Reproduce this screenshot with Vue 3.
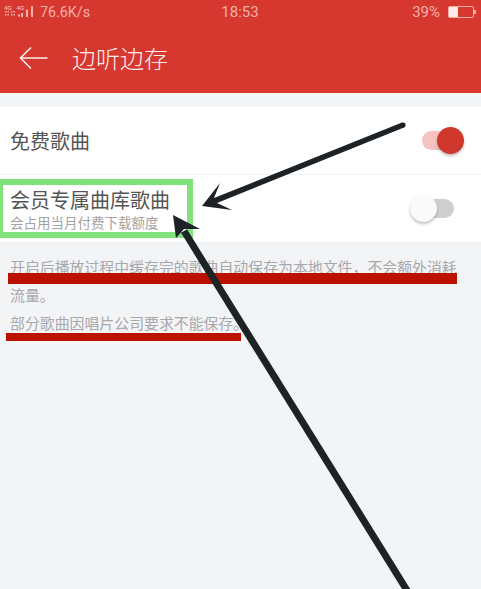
<script setup>
const status = { left: '76.6K/s', time: '18:53', battery: '39%' }
</script>

<template>
  <div class="page">
    <header class="head">
      <div class="status">
        <div class="status-left">
          <svg class="signal" width="30" height="14" viewBox="0 0 30 14">
            <g fill="#f2b0aa">
              <rect x="1" y="6" width="1.5" height="1.5" /><rect x="3.5" y="6" width="1.5" height="1.5" />
              <rect x="1" y="9" width="1.5" height="1.5" /><rect x="3.5" y="9" width="1.5" height="1.5" />
              <rect x="7" y="6" width="1.5" height="1.5" /><rect x="9.5" y="6" width="1.5" height="1.5" />
              <rect x="7" y="9" width="1.5" height="1.5" /><rect x="9.5" y="9" width="1.5" height="1.5" />
              <rect x="14" y="9.5" width="2" height="2" />
              <rect x="17" y="8" width="2" height="4" />
              <rect x="22" y="4.5" width="2" height="7.5" />
              <rect x="27" y="1" width="2" height="11" />
            </g>
            <text x="0" y="4.8" class="sig-text">4G</text>
            <text x="12.5" y="4.8" class="sig-text">4G</text>
          </svg>
          <span class="speed">{{ status.left }}</span>
        </div>
        <span class="time">{{ status.time }}</span>
        <div class="status-right">
          <span class="pct">{{ status.battery }}</span>
          <span class="battery"><span class="battery-fill"></span></span>
        </div>
      </div>
      <div class="bar">
        <svg class="back" width="30" height="26" viewBox="0 0 30 26" fill="none" stroke="#fdeeec" stroke-width="1.6">
          <path d="M1.5 13H28.5M12 2.5 1.5 13 12 23.5" />
        </svg>
        <span class="title">边听边存</span>
      </div>
    </header>

    <section class="card">
      <div class="row row-first">
        <span class="row-title">免费歌曲</span>
        <span class="toggle on"><span class="knob"></span></span>
      </div>
      <div class="row row-second">
        <div class="row-text">
          <span class="row-title">会员专属曲库歌曲</span>
          <span class="row-sub">会占用当月付费下载额度</span>
        </div>
        <span class="toggle off"><span class="knob"></span></span>
      </div>
    </section>

    <section class="notes">
      <p class="note">开启后播放过程中缓存完的歌曲自动保存为本地文件，不会额外消耗流量。</p>
      <p class="note">部分歌曲因唱片公司要求不能保存。</p>
    </section>

    <div class="mark-green"></div>
    <div class="mark-red mark-a"></div>
    <div class="mark-red mark-b"></div>

    <svg class="arrows" width="481" height="589" viewBox="0 0 481 589" fill="#1d2226">
      <circle cx="403" cy="125" r="2.6" />
      <path d="M202 206 220 183 214 198 402 122.6 404 127.4 217 203 232 210Z" />
      <path d="M408 592 184 231" stroke="#1d2226" stroke-width="7" fill="none" />
      <path d="M173 215 200 229 184 229 176 238Z" />
    </svg>
  </div>
</template>

<style>
html, body { margin: 0; padding: 0; }
</style>

<style scoped>
.page {
  position: relative;
  width: 481px;
  height: 589px;
  overflow: hidden;
  background: #f3f4f6;
  font-family: "Noto Sans CJK SC", "Liberation Sans", sans-serif;
}
.head { height: 93px; background: #d6382f; display: flex; flex-direction: column; }
.status {
  height: 24px;
  padding: 0 7px 0 4px;
  display: grid;
  grid-template-columns: 1fr auto 1fr;
  align-items: center;
  color: #f2b0aa;
  font-family: Roboto, "Liberation Sans", sans-serif;
  font-size: 15px;
}
.status-left { display: flex; align-items: center; gap: 6px; }
.speed { font-size: 14.3px; }
.time { padding-left: 2px; }
.sig-text { font-size: 6px; font-weight: 700; fill: #f2b0aa; font-family: "Liberation Sans", sans-serif; }
.status-right { display: flex; align-items: center; justify-content: flex-end; gap: 8px; }
.battery {
  width: 24px; height: 10px; border: 1px solid #f2b0aa; border-radius: 2px;
  display: block; box-sizing: content-box; position: relative;
}
.battery::after {
  content: ""; position: absolute; right: -3px; top: 3px; width: 2px; height: 4px; background: #f2b0aa;
}
.battery-fill { display: block; width: 9px; height: 10px; background: #fdecea; }
.bar { flex: 1; display: flex; align-items: center; padding: 0 0 1px 19px; gap: 23px; }
.title { color: #fdeeec; font-size: 24px; line-height: 30px; font-weight: 300; }
.card { margin-top: 14px; background: #fff; height: 135px; display: flex; flex-direction: column; }
.row { height: 67px; display: flex; align-items: center; justify-content: space-between; padding: 0 21px 0 10px; }
.row-second { border-top: 1px solid #f0f0f1; }
.row-text { display: flex; flex-direction: column; }
.row-title { font-size: 20px; line-height: 26px; color: #555; }
.row-sub { font-size: 13.5px; line-height: 18px; color: #a3a3a3; }
.toggle { position: relative; display: block; height: 19px; border-radius: 10px; }
.toggle.on { width: 38px; background: #f5c4c1; }
.toggle.off { width: 32px; margin-right: 6px; background: #cfcfcf; }
.knob {
  position: absolute; top: -4px; width: 27px; height: 27px; border-radius: 50%;
  box-shadow: 0 2px 3px rgba(0,0,0,.25);
}
.on .knob { right: -4px; background: #d0372c; }
.off .knob { left: -12px; background: #fafafa; }
.notes { padding: 11px 20px 0 10px; }
.note { margin: 0; font-size: 14.9px; line-height: 28px; color: #a7a8ab; }
.mark-green {
  position: absolute; left: 0; top: 179px; width: 193px; height: 59px;
  box-sizing: border-box; border: 6px solid #7fe27a; border-left-width: 3px;
}
.mark-red { position: absolute; background: #bb1200; }
.mark-a { left: 8px; top: 273px; width: 449px; height: 11px; }
.mark-b { left: 6px; top: 333px; width: 235px; height: 8px; }
.arrows { position: absolute; left: 0; top: 0; pointer-events: none; }
</style>
